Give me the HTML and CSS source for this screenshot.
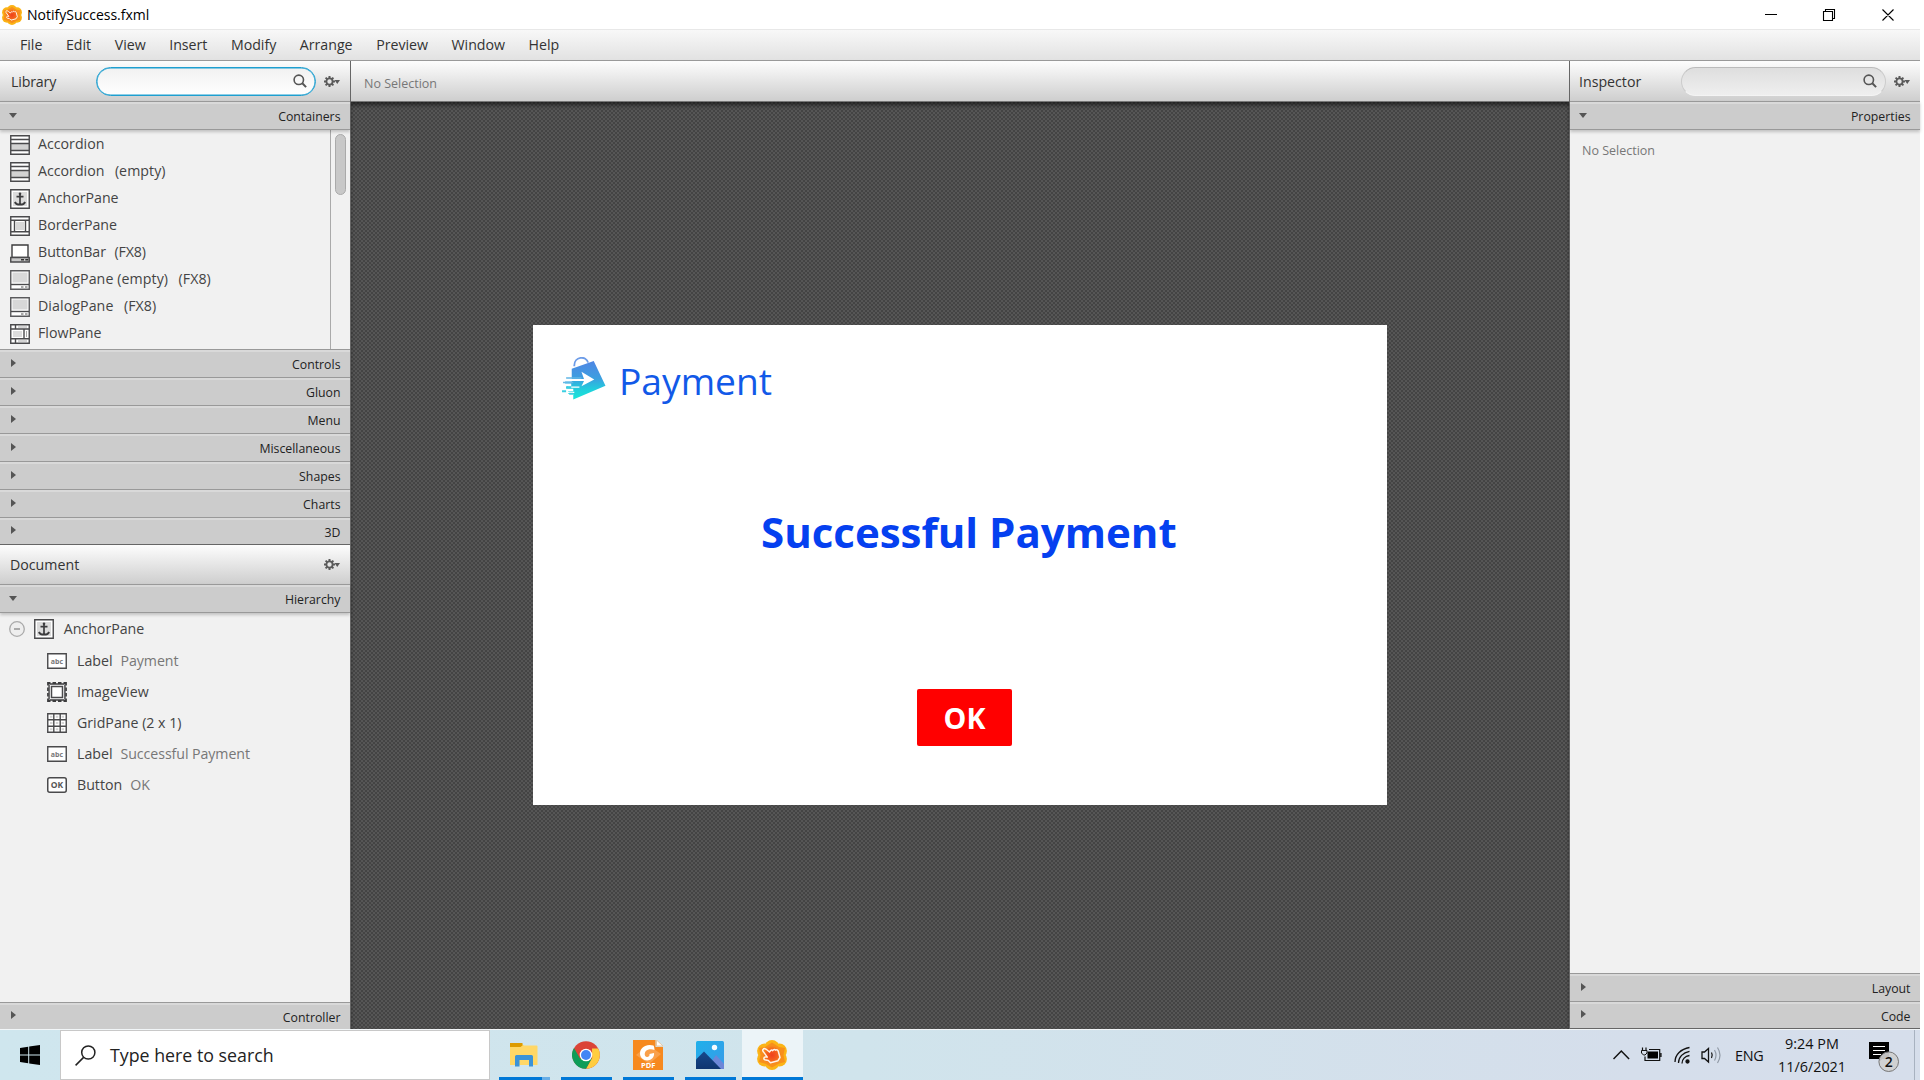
FILE: index.html
```html
<!DOCTYPE html>
<html lang="en">
<head>
<meta charset="utf-8">
<title>NotifySuccess.fxml</title>
<link rel="stylesheet" href="styles.css">
</head>
<body>
<svg class="defs" width="0" height="0">
  <defs>
    <linearGradient id="bagfill" x1="0" y1="0" x2="0" y2="1"><stop offset="0" stop-color="#4f86e4"/><stop offset=".45" stop-color="#3c9fe0"/><stop offset=".75" stop-color="#1fd0dc"/><stop offset="1" stop-color="#18e6d8"/></linearGradient>
    <linearGradient id="sky" x1="0" y1="0" x2="1" y2="1"><stop offset="0" stop-color="#1fb0ea"/><stop offset="1" stop-color="#3a9be8"/></linearGradient>
    <linearGradient id="hill" x1="0" y1="0" x2="0" y2="1"><stop offset="0" stop-color="#17488c"/><stop offset="1" stop-color="#0f3570"/></linearGradient>
    <radialGradient id="core"><stop offset="0" stop-color="#f0401c"/><stop offset=".6" stop-color="#f4601c"/><stop offset="1" stop-color="#f88a1c"/></radialGradient>
    <symbol id="i-app" viewBox="0 0 30 30">
      <g fill="#fbb416"><circle cx="15" cy="7.5" r="7.5"/><circle cx="15" cy="22.5" r="7.5"/><circle cx="7.6" cy="11" r="7.5"/><circle cx="22.4" cy="11" r="7.5"/><circle cx="7.6" cy="19" r="7.5"/><circle cx="22.4" cy="19" r="7.5"/></g>
      <path d="M15 2.500 22 7l6 1-1.500 7 1.500 7-6 1.500-7 4-7-4L2 22l1.500-7L2 8l6-1z" fill="#f88f1c"/>
      <circle cx="15" cy="15" r="9" fill="url(#core)"/>
      <path d="M6 9.500c1-1.500 2.500-.8 3.500 0l3 2.500c1-2 2.200-2.300 3.200-1.400.9-1.500 2.200-1.500 2.900-.4 1.300-.8 2.300-.2 2.700 1l1.700 6.300-2 3.200-7.500 2-2.200-2.200-3.500-.8c-1.500-.6-1-2.600.3-2.700l2.200.1-3.800-5.200c-.8-.9-1.100-1.700-.5-2.400z" fill="none" stroke="#fff3e8" stroke-width="1.500" stroke-linejoin="round"/>
    </symbol>
    <symbol id="i-search" viewBox="0 0 14 14"><circle cx="5.800" cy="5.800" r="4.700" fill="none" stroke="#555" stroke-width="1.600"/><path d="m9.300 9.300 3.800 3.800" stroke="#555" stroke-width="2"/></symbol>
    <symbol id="i-gear" viewBox="0 0 17 11"><path d="M5.500 0v11M0 5.500h11M1.600 1.600l7.800 7.800M9.400 1.600 1.600 9.400" stroke="#5a5a5a" stroke-width="2"/><circle cx="5.500" cy="5.500" r="3.100" fill="#e6e6e6" stroke="#5a5a5a" stroke-width="1.800"/><path d="M10.500 4H16l-2.750 4z" fill="#5a5a5a"/></symbol>
    <symbol id="i-accordion" viewBox="0 0 20 20"><path d="M.5.500h19v19H.5z" fill="#fff"/><path d="M1 8h18v7H1z" fill="#d2d2d2"/><path d="M.75.750h18.500v18.500H.75zM1 4.500h18M1 8.500h18M1 15.500h18" fill="none" stroke="#4a4a4c" stroke-width="1.400"/></symbol>
    <symbol id="i-anchor" viewBox="0 0 20 20"><path d="M.75.750h18.500v18.500H.75z" fill="#fff" stroke="#4a4a4c" stroke-width="1.400"/><path d="M3 3h14v14H3z" fill="#dcdcdc"/><path d="M10 4v12M6.500 7.700h7M4.800 13c1 2 3 2.700 5.200 2.700s4.200-.7 5.200-2.700" fill="none" stroke="#3c3c3e" stroke-width="1.700"/><circle cx="10" cy="4.700" r="1.300" fill="#3c3c3e"/></symbol>
    <symbol id="i-border" viewBox="0 0 20 20"><path d="M.75.750h18.500v18.500H.75z" fill="#fff"/><path d="M6 6h8v8H6z" fill="#d8d8d8"/><path d="M.75.750h18.500v18.500H.75zM1 4.300h18M1 15.700h18M4.500 4.500v11M15.500 4.500v11" fill="none" stroke="#4a4a4c" stroke-width="1.400"/></symbol>
    <symbol id="i-buttonbar" viewBox="0 0 20 20"><path d="M2 2h16v12.500H2z" fill="#fff" stroke="#3c3c3e" stroke-width="1.400"/><path d="M.75 14.500h18.500V19H.75z" fill="#c8c8c8" stroke="#4a4a4c" stroke-width="1.400"/><path d="M11 16.700h3M15.300 16.700h3" stroke="#333" stroke-width="1.600"/></symbol>
    <symbol id="i-dialog" viewBox="0 0 20 20"><path d="M.75.750h18.500v18.500H.75z" fill="#fff" stroke="#5a5a5c" stroke-width="1.400"/><path d="M2.500 2.500h15v10h-15z" fill="#d8d8d8"/><path d="M1 14.500h18" stroke="#4a4a4c" stroke-width="1.400"/><path d="M11 17h2.500M15 17h2.500" stroke="#555" stroke-width="1.200"/></symbol>
    <symbol id="i-flow" viewBox="0 0 20 20"><path d="M.75.750h18.500v18.500H.75z" fill="#fff"/><path d="M3 7h9v6H3z" fill="#dcdcdc"/><path d="M.75.750h18.500v18.500H.75zM1 5h18M1 14.700h18M5.500 1v4M14 5v9.700M5.500 14.700V19" fill="none" stroke="#4a4a4c" stroke-width="1.400"/><path d="M8 3h9M8 17h9M16.500 7v6" stroke="#aaa"/></symbol>
    <symbol id="i-label" viewBox="0 0 20 16"><path d="M.75.750h18.500v14.500H.75z" fill="#fff" stroke="#4a4a4c" stroke-width="1.400"/><text x="10" y="11" text-anchor="middle" class="glyph" fill="#777">abc</text></symbol>
    <symbol id="i-button" viewBox="0 0 20 16"><rect x=".75" y=".75" width="18.500" height="14.500" rx="2" fill="#fff" stroke="#4a4a4c" stroke-width="1.500"/><text x="10" y="11.300" text-anchor="middle" class="glyph ok-glyph" fill="#555">OK</text></symbol>
    <symbol id="i-image" viewBox="0 0 20 20"><path d="M1 1h18v18H1z" fill="#fff" stroke="#3c3c3e" stroke-width="1.800"/><path d="M3.500.5h13M3.500 19.500h13M.5 3.500v13M19.500 3.500v13" stroke="#f1f1f1" stroke-width="1.600" stroke-dasharray="2 3.500"/><path d="M2.500 2.500h15v15h-15z" fill="none" stroke="#6a6a6c"/><path d="M4.500 4.500h11v11h-11z" fill="#fff" stroke="#4a4a4c" stroke-width="1.500"/></symbol>
    <symbol id="i-grid" viewBox="0 0 20 20"><path d="M.75.750h18.500v18.500H.75z" fill="#fff"/><path d="M3 3.700h14M3 10h14M3 16.300h14" stroke="#d4d4d4" stroke-width="2" stroke-dasharray="2.500 3.300"/><path d="M.75.750h18.500v18.500H.75zM6.800 1v18M13.200 1v18M1 6.800h18M1 13.200h18" fill="none" stroke="#4a4a4c" stroke-width="1.400"/></symbol>
  </defs>
</svg>

<div class="app">
  <header class="titlebar">
    <svg class="app-icon"><use href="#i-app"/></svg>
    <span class="title">NotifySuccess.fxml</span>
    <svg class="winbtns" width="132" height="12" fill="none" stroke="#000" stroke-width="1.100"><path d="M0 5.500h12M58.500 2.500h9v9h-9zM60.500 2.500v-2h9v9h-2M117.500.500l11 11M128.500.500l-11 11"/></svg>
  </header>
  <nav class="menubar">
    <span>File</span><span>Edit</span><span>View</span><span>Insert</span><span>Modify</span><span>Arrange</span><span>Preview</span><span>Window</span><span>Help</span>
  </nav>

  <main class="workspace">
    <aside class="left">
      <div class="toolbar">
        <span class="tool-title">Library</span>
        <div class="search focused"><svg width="14" height="14"><use href="#i-search"/></svg></div>
        <svg class="gear"><use href="#i-gear"/></svg>
      </div>
      <div class="section open"><i class="tri down"></i>Containers</div>
      <div class="library">
        <ul class="list">
          <li><svg><use href="#i-accordion"/></svg>Accordion</li>
          <li><svg><use href="#i-accordion"/></svg>Accordion<em>(empty)</em></li>
          <li><svg><use href="#i-anchor"/></svg>AnchorPane</li>
          <li><svg><use href="#i-border"/></svg>BorderPane</li>
          <li><svg><use href="#i-buttonbar"/></svg>ButtonBar<em class="near">(FX8)</em></li>
          <li><svg><use href="#i-dialog"/></svg><span class="wide">DialogPane (empty)</span><em>(FX8)</em></li>
          <li><svg><use href="#i-dialog"/></svg><span class="wide">DialogPane</span><em>(FX8)</em></li>
          <li><svg><use href="#i-flow"/></svg>FlowPane</li>
        </ul>
        <div class="scroll"><div class="thumb"></div></div>
      </div>
      <div class="section"><i class="tri"></i>Controls</div>
      <div class="section"><i class="tri"></i>Gluon</div>
      <div class="section"><i class="tri"></i>Menu</div>
      <div class="section"><i class="tri"></i>Miscellaneous</div>
      <div class="section"><i class="tri"></i>Shapes</div>
      <div class="section"><i class="tri"></i>Charts</div>
      <div class="section last"><i class="tri"></i>3D</div>
      <div class="toolbar document">
        <span class="tool-title">Document</span>
        <svg class="gear"><use href="#i-gear"/></svg>
      </div>
      <div class="section open"><i class="tri down"></i>Hierarchy</div>
      <div class="tree">
        <div class="node root"><svg class="collapse" viewBox="0 0 16 16"><circle cx="8" cy="8" r="7.300" fill="#eee" stroke="#aaa" stroke-width="1.300"/><path d="M5 8h6" stroke="#999" stroke-width="1.600"/></svg><svg><use href="#i-anchor"/></svg>AnchorPane</div>
        <div class="node"><svg class="low"><use href="#i-label"/></svg>Label<em>Payment</em></div>
        <div class="node"><svg><use href="#i-image"/></svg>ImageView</div>
        <div class="node"><svg><use href="#i-grid"/></svg>GridPane (2 x 1)</div>
        <div class="node"><svg class="low"><use href="#i-label"/></svg>Label<em>Successful Payment</em></div>
        <div class="node"><svg class="low"><use href="#i-button"/></svg>Button<em>OK</em></div>
      </div>
      <div class="section bottom"><i class="tri"></i>Controller</div>
    </aside>

    <section class="center">
      <div class="toolbar crumb">No Selection</div>
      <div class="canvas">
        <div class="stage">
          <div class="brand">
            <svg width="45" height="43" viewBox="0 0 44 42"><path d="M13 9C12.500-1 25-1.500 26.500 5.500" fill="none" stroke="#6d9ce8" stroke-width="1.800"/><path d="M10.500 11.500 32 4 43.500 28 12 41.500V36H7v-2.500h5V31H5v-2.500h5V26H4v-2h6.500z" fill="url(#bagfill)"/><path d="M20 14.500 32.500 22 20 28.500l2.500-5H5v-2h17.500z" fill="#fff"/><path d="M5 20.500h15M2 25h10" stroke="#62b7e6" stroke-width="1.500"/><path d="M7 29.500h11M5 34.500h8" stroke="#fff" stroke-width="1.300"/><path d="M1 33.500h4M6 29.500h4M8 36h4" stroke="#3ccfe2" stroke-width="2"/></svg>
            <span>Payment</span>
          </div>
          <h1>Successful Payment</h1>
          <button class="ok">OK</button>
        </div>
      </div>
    </section>

    <aside class="right">
      <div class="toolbar">
        <span class="tool-title">Inspector</span>
        <div class="search"><svg width="14" height="14"><use href="#i-search"/></svg></div>
        <svg class="gear"><use href="#i-gear"/></svg>
      </div>
      <div class="section open"><i class="tri down"></i>Properties</div>
      <div class="empty">No Selection</div>
      <div class="section"><i class="tri"></i>Layout</div>
      <div class="section end"><i class="tri"></i>Code</div>
    </aside>
  </main>

  <footer class="taskbar">
    <div class="start"><svg width="20" height="20"><path d="M0 3 8.200 1.800V9.500H0zM9.200 1.600 20 0v9.500H9.200zM0 10.500h8.200v7.700L0 17zM9.200 10.500H20V20L9.200 18.400z"/></svg></div>
    <div class="find"><svg width="21" height="21" fill="none" stroke="#222" stroke-width="1.500"><circle cx="13.300" cy="7.500" r="6.600"/><path d="M8.600 12.400.6 20.400"/></svg>Type here to search</div>
    <div class="tasks">
      <div class="task files"><svg width="28" height="24"><path d="M0 1h12l2 1.500h12.500a1 1 0 0 1 1 1V22H0z" fill="#ffd766"/><path d="M0 0h12.500v2.500L10.500 4H0z" fill="#dd9b00"/><path d="M5 23.500V13.500a1.500 1.500 0 0 1 1.500-1.500h15a1.500 1.500 0 0 1 1.500 1.500v10h-4V17H9.500v6.500z" fill="#3b93d8"/></svg></div>
      <div class="task"><svg width="28" height="28" viewBox="-14 -14 28 28"><circle r="13.800" fill="#db4437"/><path d="M-12-7A13.800 13.800 0 0 0 .2 13.800L6 3.500-6 3.500z" fill="#0f9d58"/><path d="M12.200-6.500A13.800 13.800 0 0 1 .2 13.800L6.200 3 6-6.500z" fill="#ffcd40"/><circle r="6.300" fill="#fff"/><circle r="5" fill="#4285f4"/></svg></div>
      <div class="task"><svg width="30" height="30"><path d="M0 0h22.500v7H30v23H0z" fill="#f6891f"/><path d="m15 5 13 9-12 10L3 15z" fill="#f9a04b"/><path d="M23.500 0v6H30z" fill="#fff" stroke="#e5c8a6"/><path d="M20.500 5.500C13 3.500 7 7.500 7 13.500c0 5 5 8 9.500 6.500 3.500-1.200 5-4.500 4.500-7l-4.500 1c.5 2-1.500 3.500-3.300 2.700-2.500-1.200-1.700-6 1.800-7 2-.6 4.500-.7 6.500.3-.1-2-.3-3.300-1-4.500z" fill="#fff"/><text x="15.200" y="27.500" text-anchor="middle" class="pdf">PDF</text></svg></div>
      <div class="task"><svg width="28" height="28"><rect width="28" height="28" rx="1.500" fill="url(#sky)"/><path d="M12 26 20 14l8 9v5H12z" fill="#6d87d8"/><path d="M0 18.500 8 10.500l17 17.500H0z" fill="url(#hill)"/><circle cx="18.500" cy="6.500" r="2.700" fill="#f4fbff"/></svg></div>
      <div class="task active"><svg width="30" height="30"><use href="#i-app"/></svg></div>
    </div>
    <div class="tray">
      <svg width="110" height="24" fill="none" stroke="#111" stroke-width="1.500"><path d="m.5 16 7.800-8 7.800 8"/><path d="M34.500 8.500H45v7H34.500z" fill="#000" stroke="none"/><path d="M36 6.500H46.700V17.500H32V13.500M48 10v4" stroke-width="1.200"/><path d="M29.500 4.500v3M33 4.500v3" stroke-width="1.200"/><path d="M28.500 7.500h5.500v2.500l-2 2h-1.500l-2-2z" stroke-width="1"/><g stroke-width="1.300"><path d="M62 19C62 11.500 68 6 76.500 4.500"/><path d="M65.500 20C65.500 14 70 9.500 76.500 8.300"/><path d="M69 20.500C69 16.500 72 13.200 76.500 12.500"/></g><circle cx="74.500" cy="18.500" r="1.400" fill="#111"/><path d="M89 9h2.500l4-3.500v13.500l-4-3.500H89z" stroke-width="1.300"/><path d="M98.500 9.500q1.500 2.700 0 5.500" stroke-width="1.200"/><path d="M101.500 7q3 5.200 0 10.500M104.500 4.500q5 7.800 0 15.500" stroke="#9099a5" stroke-width="1.200"/></svg>
      <span class="lang">ENG</span>
      <div class="clock"><span>9:24 PM</span><span>11/6/2021</span></div>
      <div class="notes"><svg width="32" height="32"><path d="M0 0h20v17h-7l-2.500 3v-3H0z"/><path d="M4 4.500h12M4 8.500h12M4 12.500h8" stroke="#fff" stroke-width="1.200"/><circle cx="19.700" cy="19.700" r="9.800" fill="#d0d0d0" fill-opacity=".93" stroke="#777"/><text x="19.700" y="24.700" text-anchor="middle" class="count">2</text></svg></div>
    </div>
  </footer>
</div>
</body>
</html>
```
FILE: styles.css
```css
* { box-sizing: border-box; }
body { margin: 0; background: #fff; font-family: "Open Sans", "Noto Sans", sans-serif; font-size: 14.2px; color: #333; overflow: hidden; }
.defs { display: block; position: absolute; }
em { font-style: normal; }
svg { flex: none; }

.app { width: 1920px; height: 1080px; display: flex; flex-direction: column; }
.titlebar { height: 29px; display: flex; align-items: center; padding: 0 23px 0 2px; color: #000; }
.app-icon { width: 20px; height: 20px; margin-right: 5px; }
.title { font-size: 14px; flex: 1; letter-spacing: 0; }

.menubar { height: 32px; border-top: 1px solid #e8e8e8; border-bottom: 1px solid #999; background: linear-gradient(#f8f8f8, #e2e2e2); display: flex; align-items: center; gap: 23.600px; padding: 0 0 2px 20px; font-size: 14.2px; letter-spacing: -.02px; }

.workspace { flex: 1; min-height: 0; display: grid; grid-template-columns: 350px 1fr 351px; }
.left, .right { display: flex; flex-direction: column; background: #f1f1f1; min-height: 0; }
.right { border-left: 1px solid #666; }
.center { display: flex; flex-direction: column; border-left: 1px solid #666; }

.toolbar { height: 40px; flex: none; display: flex; align-items: center; background: linear-gradient(#fdfdfd, #cecece); padding: 0 9px 0 11px; }
.tool-title { font-size: 14.2px; }
.left .toolbar:first-child .tool-title { letter-spacing: -.15px; }
.search { height: 29px; border: 1px solid #ccc; border-top-color: #bbb; border-bottom-color: #f4f4f4; border-radius: 15px; background: linear-gradient(#dedede, #efefef); display: flex; align-items: center; justify-content: flex-end; padding-right: 8px; margin-left: auto; }
.left .search { width: 220px; }
.right .search { width: 205px; }
.right .toolbar { padding-left: 9px; }
.search.focused { border: 1px solid #1e9fd0; box-shadow: inset 0 0 0 .5px #1e9fd0; background: linear-gradient(#f1f1f1, #fff); }
.gear { width: 17px; height: 11px; margin-left: 8px; }
.document { padding-left: 10px; height: 39px; }
.document .gear { margin-left: auto; }

.section { height: 28px; flex: none; border-top: 1px solid #999; background: linear-gradient(#d9d9d9 2px, #ccc 2px); display: flex; align-items: center; justify-content: space-between; padding: 2px 9.500px 0 11px; font-size: 12.300px; color: #222; }
.section.open { height: 29px; border-bottom: 1px solid #999; box-shadow: 0 2px 3px #0003; z-index: 1; }
.section.last { border-bottom: 1px solid #666; }
.section.bottom { height: 27px; }
.section.end { border-bottom: 1px solid #666; }
.tri { width: 0; height: 0; border-left: 5px solid #555; border-top: 4px solid transparent; border-bottom: 4px solid transparent; margin-top: -4px; }
.tri.down { border-top: 5px solid #555; border-left: 4px solid transparent; border-right: 4px solid transparent; border-bottom: 0; margin: -2px 0 0 -2px; }

.library { height: 219px; flex: none; display: flex; }
.list { flex: 1; margin: 0; padding: 0 0 0 10.400px; list-style: none; border-right: 1px solid #aaa; }
.list li { height: 27px; display: flex; align-items: center; color: #444; }
.list svg { width: 20px; height: 20px; margin-right: 7.600px; position: relative; top: 1px; }
.list em { margin-left: 10.500px; letter-spacing: .05px; }
.list em.near { margin-left: 8.500px; letter-spacing: -.15px; }
.wide { letter-spacing: .08px; }
.scroll { width: 19px; padding: 4px 4px 0; }
.thumb { height: 61px; border: 1px solid #aaa; border-radius: 6px; background: #c8c8c8; }

.tree { flex: 1; }
.node { height: 31px; display: flex; align-items: center; padding-left: 47.300px; color: #444; }
.node svg { width: 20px; height: 20px; margin-right: 9.700px; }
.node svg.low { height: 16px; }
.node em { color: #777; margin-left: 8px; letter-spacing: -.07px; }
.node.root { padding-left: 9px; margin-bottom: 1px; }
.node.root svg.collapse { width: 16px; height: 16px; margin-right: 9px; }
.glyph { font: 700 7px "Open Sans", sans-serif; }
.ok-glyph { font-size: 8.500px; }

.crumb { font-size: 12.500px; color: #777; padding: 4px 0 0 13px; }
.canvas { flex: 1; border-top: 1px solid #777; background: repeating-conic-gradient(#444 0 25%, #565656 0 50%) 0 0 / 4px 4px; box-shadow: inset 0 4px 4px -1px #0008; display: flex; align-items: center; justify-content: center; padding-bottom: 1px; }
.stage { width: 854px; height: 480px; background: #fff; display: flex; flex-direction: column; padding: 32px 28px 0; }
.brand { height: 50px; display: flex; align-items: flex-start; color: #1259e8; }
.brand span { font-size: 37.200px; line-height: 48px; margin-left: 13px; }
.stage h1 { margin: 95px 0 0 200px; font-size: 42px; line-height: 60px; color: #0540f0; }
.ok { margin: 127px 0 0 356px; width: 95px; height: 57px; border: 0; border-radius: 2px; background: #f00; color: #fff; font: 700 28.700px "Open Sans", sans-serif; padding: 0; }

.empty { flex: 1; color: #777; font-size: 12.500px; padding: 12px 0 0 12px; }

.taskbar { height: 51px; flex: none; border-top: 1px solid #f2f6f8; background: linear-gradient(90deg, #cfe6ee, #d0e4ec 45%, #d5deeb 85%, #d6deeb); display: flex; }
.start { width: 60px; display: flex; align-items: center; justify-content: center; }
.find { width: 430px; border: 1px solid #c8c8c8; background: #fff; display: flex; align-items: center; gap: 14px; padding-left: 14px; font-size: 17.800px; color: #222; }
.tasks { display: flex; gap: 11px; padding-left: 9px; }
.task { width: 51px; border-bottom: 3px solid #0078d7; display: flex; align-items: center; justify-content: center; padding: 2px 2px 0 0; }
.task.files { border-image: linear-gradient(90deg, #0078d7 41px, #68aee6 41px) 3; border-style: solid; border-width: 0 0 3px; }
.task.active { width: 61px; margin-left: -5px; background: #ecf4f8; }
.tray { margin-left: auto; display: flex; align-items: center; color: #111; font-size: 14.400px; }
.lang { width: 28px; margin-left: 12px; letter-spacing: -.3px; }
.clock { width: 68px; margin-left: 15px; display: flex; flex-direction: column; align-items: center; line-height: 23px; letter-spacing: 0; }
.notes { display: flex; margin-left: 23px; padding-top: 6px; width: 46px; height: 50px; align-items: center; border-right: 1px solid #a8b2c0; margin-right: 5px; }
.pdf { font: 700 7.500px "Open Sans", sans-serif; fill: #fff; }
.count { font: 600 14px "Open Sans", sans-serif; fill: #111; }
```
